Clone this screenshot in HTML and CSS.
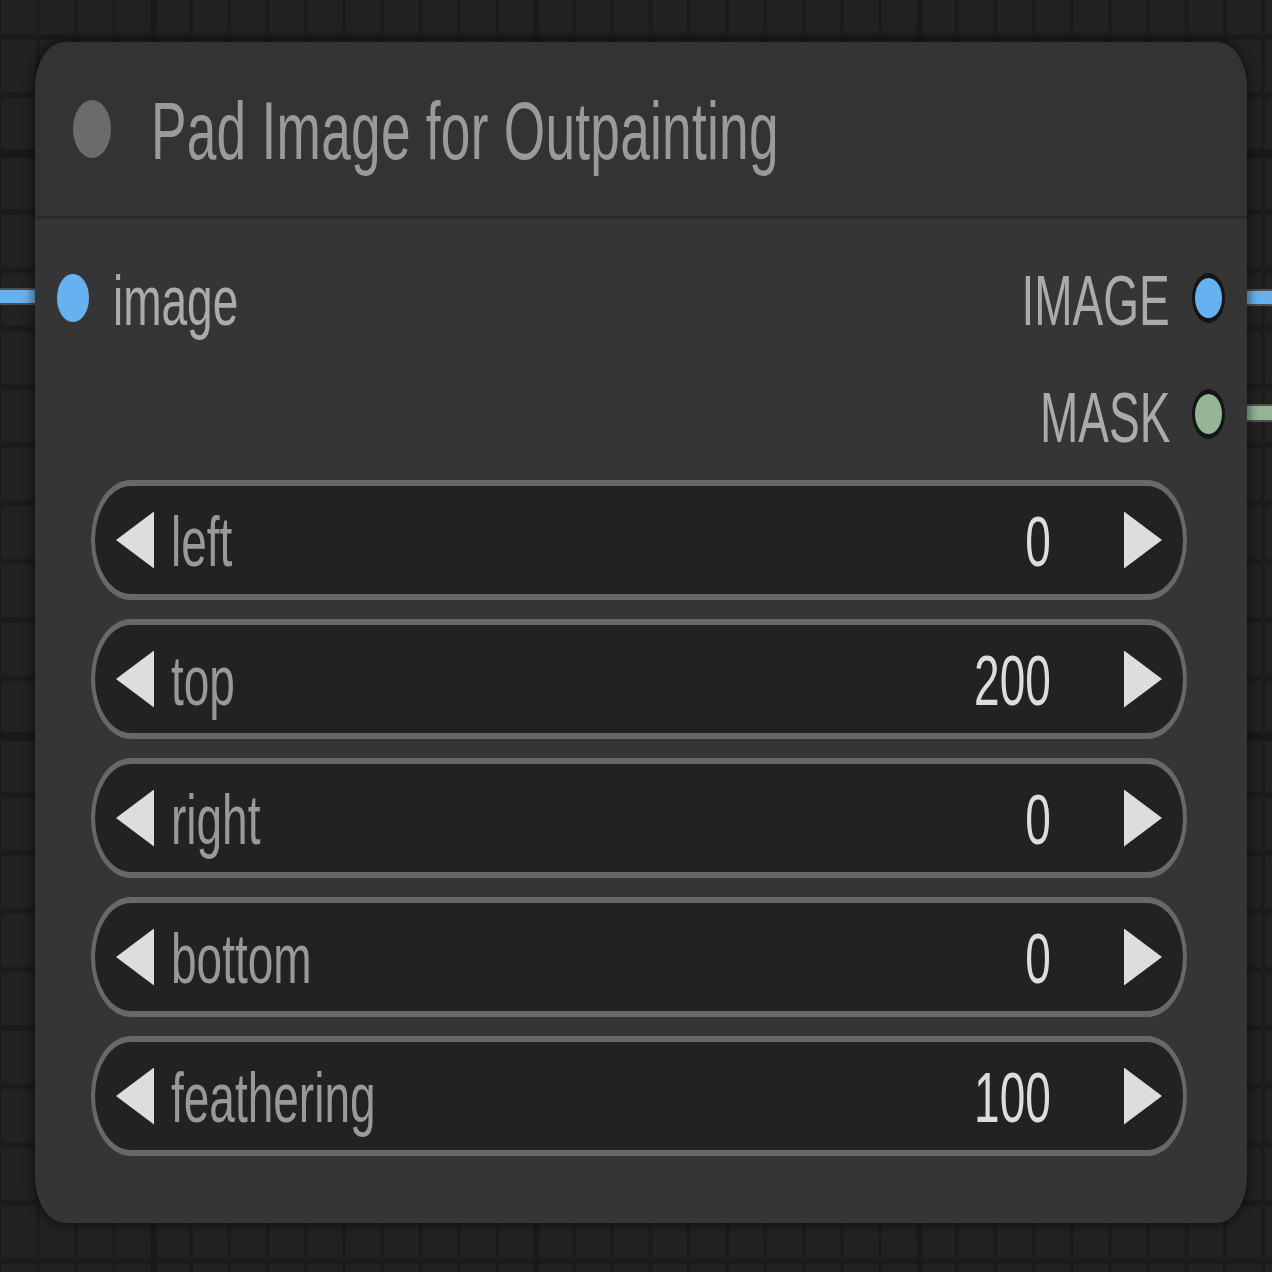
FILE: index.html
```html
<!DOCTYPE html>
<html>
<head>
<meta charset="utf-8">
<link rel="stylesheet" href="styles.css">
</head>
<body>
<div class="stage">
  <div class="wire wire-in"></div>
  <div class="wire wire-out-image"></div>
  <div class="wire wire-out-mask"></div>
  <div class="node">
    <div class="title">
      <span class="title-dot"></span>
      <span class="title-text">Pad Image for Outpainting</span>
    </div>
    <div class="body">
      <div class="slot-row">
        <div class="slot-in">
          <span class="dot dot-in"></span>
          <span class="slot-label label-left">image</span>
        </div>
        <div class="slot-out">
          <span class="slot-label label-right">IMAGE</span>
          <span class="dot dot-out dot-image"></span>
        </div>
      </div>
      <div class="slot-row slot-row-right">
        <div class="slot-out">
          <span class="slot-label label-right">MASK</span>
          <span class="dot dot-out dot-mask"></span>
        </div>
      </div>
      <div class="widgets">
        <div class="widget"><span class="arrow arrow-l"></span><span class="w-label">left</span><span class="w-value">0</span><span class="arrow arrow-r"></span></div>
        <div class="widget"><span class="arrow arrow-l"></span><span class="w-label">top</span><span class="w-value">200</span><span class="arrow arrow-r"></span></div>
        <div class="widget"><span class="arrow arrow-l"></span><span class="w-label">right</span><span class="w-value">0</span><span class="arrow arrow-r"></span></div>
        <div class="widget"><span class="arrow arrow-l"></span><span class="w-label">bottom</span><span class="w-value">0</span><span class="arrow arrow-r"></span></div>
        <div class="widget"><span class="arrow arrow-l"></span><span class="w-label">feathering</span><span class="w-value">100</span><span class="arrow arrow-r"></span></div>
      </div>
    </div>
  </div>
</div>
</body>
</html>
```

FILE: styles.css
```css
html, body {
  margin: 0;
  padding: 0;
  width: 1272px;
  height: 1272px;
  overflow: hidden;
  background: #222222;
}

.stage {
  position: relative;
  width: 1272px;
  height: 1272px;
  box-sizing: border-box;
  padding: 42px 0 0 35px;
  overflow: hidden;
  font-family: "Liberation Sans", Arial, sans-serif;
  background-color: #222222;
  background-image:
    linear-gradient(90deg, #191919 6.5px, transparent 6.5px),
    linear-gradient(180deg, #191919 9px, transparent 9px),
    linear-gradient(90deg, #1b1b1b 4px, transparent 4px),
    linear-gradient(180deg, #1b1b1b 6px, transparent 6px);
  background-size: 383px 583px, 383px 583px, 38.3px 58.3px, 38.3px 58.3px;
  background-position: 150.5px 0, 0 149px, -2.6px 0, 0 34px;
}

.wire {
  position: absolute;
  box-sizing: border-box;
  height: 17px;
  border-top: 2px solid #4f4f4f;
  border-bottom: 2px solid #4f4f4f;
}
.wire-in {
  left: 0;
  top: 288px;
  width: 53px;
  background: #66b2f0;
}
.wire-out-image {
  left: 1235px;
  top: 289px;
  width: 37px;
  background: #66b2f0;
  border-left: 2px solid #777;
}
.wire-out-mask {
  left: 1235px;
  top: 404px;
  width: 37px;
  height: 18px;
  background: #94b596;
  border-left: 2px solid #777;
}

.node {
  position: relative;
  z-index: 1;
  width: 1212px;
  height: 1181px;
  border-radius: 30px / 46px;
  background: #353535;
  overflow: hidden;
  display: flex;
  flex-direction: column;
  box-shadow: 0 0 10px 3px rgba(0, 0, 0, 0.45);
}

.title {
  height: 174px;
  flex: none;
  background: #333333;
  border-bottom: 3px solid #2a2a2a;
  display: flex;
  align-items: center;
  padding-left: 38px;
}
.title-dot {
  width: 38px;
  height: 58px;
  border-radius: 50%;
  background: #6b6b6b;
  margin-right: 40px;
  flex: none;
}
.title-text {
  font-size: 81px;
  letter-spacing: 0.4px;
  line-height: 1;
  color: #9a9a9a;
  white-space: nowrap;
  position: relative;
  top: 2px;
  transform: scaleX(0.657);
  transform-origin: 0 50%;
}

.body {
  padding-top: 21px;
  display: flex;
  flex-direction: column;
}

.slot-row {
  height: 116px;
  display: flex;
  align-items: center;
  justify-content: space-between;
  padding: 0 21.7px 0 22.3px;
}
.slot-row-right {
  justify-content: flex-end;
}
.slot-in, .slot-out {
  display: flex;
  align-items: center;
}
.slot-label {
  font-size: 70px;
  line-height: 1;
  color: #ababab;
  white-space: nowrap;
  position: relative;
  top: 3px;
  transform: scaleX(0.657);
}
.label-left {
  margin-left: 24.3px;
  transform-origin: 0 50%;
}
.label-right {
  margin-right: 22.3px;
  transform-origin: 100% 50%;
}
.slot-row-right .slot-label {
  top: 4px;
}
.dot {
  display: block;
  border-radius: 50%;
  flex: none;
}
.dot-in {
  width: 31.5px;
  height: 48px;
  background: #66b2f0;
}
.dot-out {
  width: 33px;
  height: 50px;
  box-sizing: border-box;
  border-style: solid;
  border-color: #151515;
  border-width: 5px 3.3px;
}
.dot-image {
  background: #66b2f0;
}
.dot-mask {
  background: #94b596;
}

.widgets {
  display: flex;
  flex-direction: column;
  gap: 19px;
  margin: 8px 60px 0 56px;
}
.widget {
  height: 120px;
  box-sizing: border-box;
  border-style: solid;
  border-color: #686868;
  border-width: 6px 4px;
  border-radius: 40px / 60px;
  background: #222222;
  display: flex;
  align-items: center;
  padding: 0 21px;
}
.arrow {
  width: 38px;
  height: 57px;
  background: #dddddd;
  flex: none;
}
.arrow-l {
  clip-path: polygon(0 50%, 100% 0, 100% 100%);
}
.arrow-r {
  clip-path: polygon(0 0, 100% 50%, 0 100%);
}
.w-label {
  margin-left: 17px;
  font-size: 70px;
  line-height: 1;
  color: #999999;
  flex: 1;
  white-space: nowrap;
  position: relative;
  top: 2px;
  transform: scaleX(0.657);
  transform-origin: 0 50%;
}
.w-value {
  margin-right: 73px;
  font-size: 70px;
  line-height: 1;
  color: #dddddd;
  white-space: nowrap;
  position: relative;
  top: 2px;
  transform: scaleX(0.657);
  transform-origin: 100% 50%;
}
```
